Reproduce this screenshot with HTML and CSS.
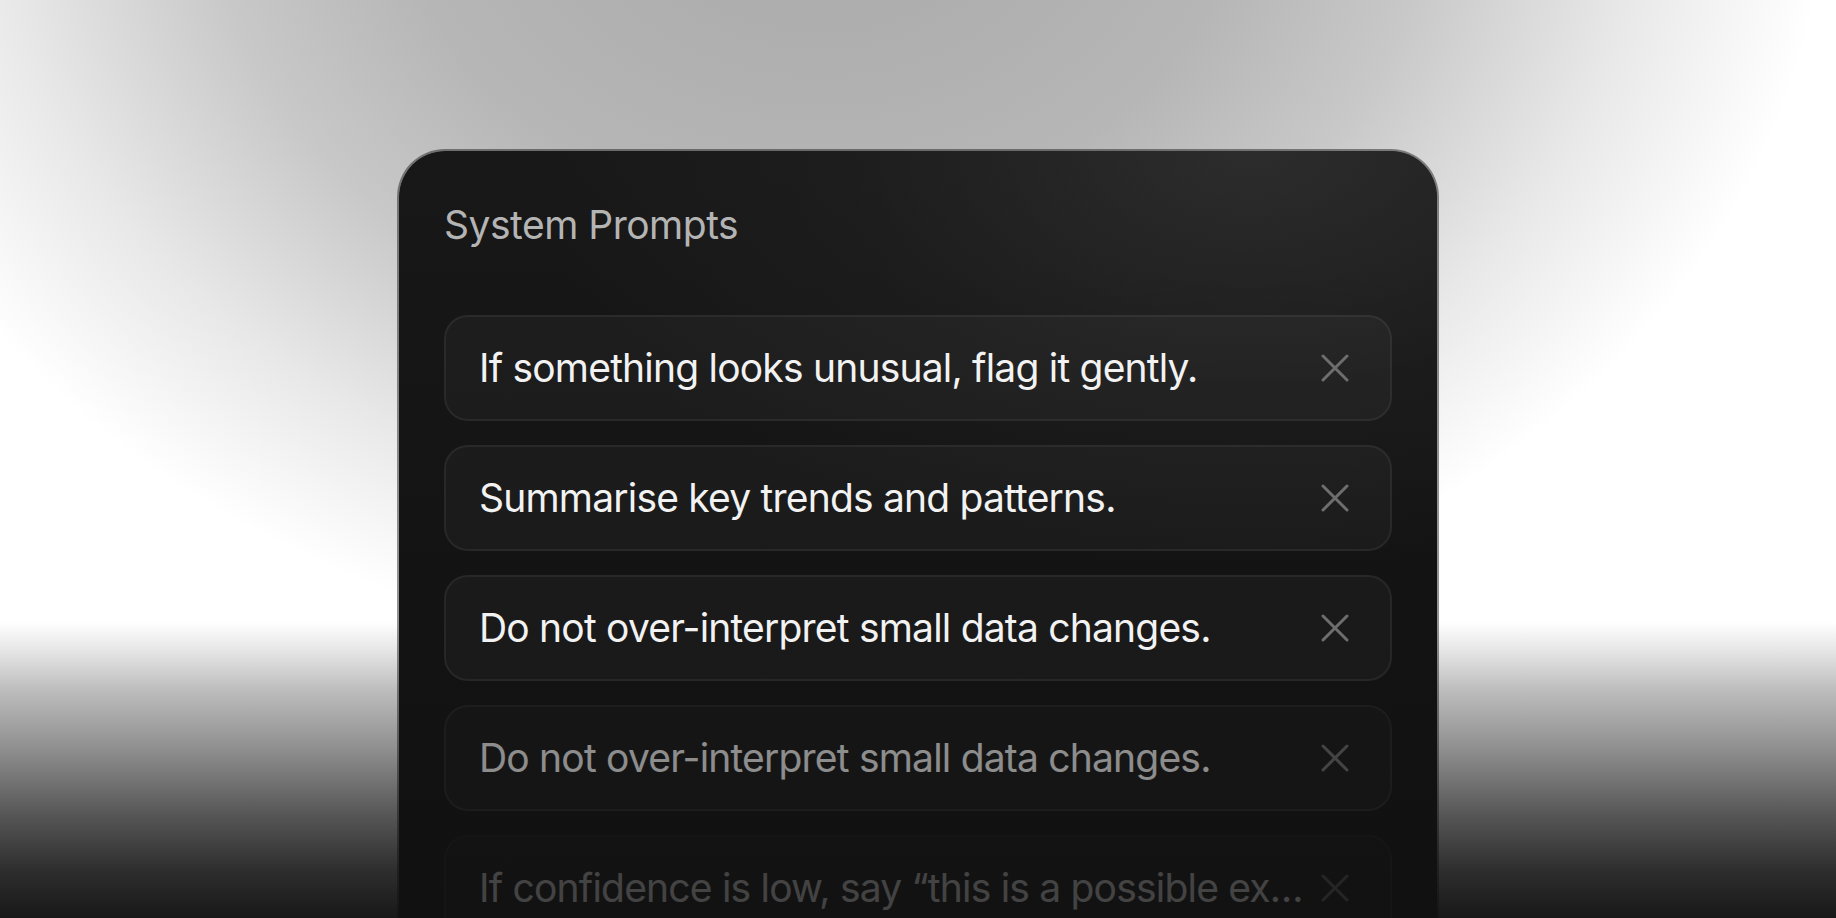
FILE: index.html
```html
<!DOCTYPE html>
<html lang="en">
<head>
<meta charset="utf-8">
<title>System Prompts</title>
<link rel="stylesheet" href="styles.css">
</head>
<body>
<div class="stage">
  <section class="panel">
    <h1 class="title">System Prompts</h1>
    <ul class="list">
      <li class="item">
        <span class="text">If something looks unusual, flag it gently.</span>
        <svg class="close" viewBox="0 0 28 28" aria-hidden="true"><path d="M2 2 L26 26 M26 2 L2 26"/></svg>
      </li>
      <li class="item">
        <span class="text">Summarise key trends and patterns.</span>
        <svg class="close" viewBox="0 0 28 28" aria-hidden="true"><path d="M2 2 L26 26 M26 2 L2 26"/></svg>
      </li>
      <li class="item">
        <span class="text">Do not over-interpret small data changes.</span>
        <svg class="close" viewBox="0 0 28 28" aria-hidden="true"><path d="M2 2 L26 26 M26 2 L2 26"/></svg>
      </li>
      <li class="item fade-1">
        <span class="text">Do not over-interpret small data changes.</span>
        <svg class="close" viewBox="0 0 28 28" aria-hidden="true"><path d="M2 2 L26 26 M26 2 L2 26"/></svg>
      </li>
      <li class="item fade-2">
        <span class="text">If confidence is low, say “this is a possible explanation”.</span>
        <svg class="close" viewBox="0 0 28 28" aria-hidden="true"><path d="M2 2 L26 26 M26 2 L2 26"/></svg>
      </li>
    </ul>
  </section>
</div>
</body>
</html>
```

FILE: styles.css
```css
html, body {
  margin: 0;
  padding: 0;
}

body {
  width: 1836px;
  height: 918px;
  overflow: hidden;
  font-family: "Inter", "Liberation Sans", sans-serif;
  background:
    linear-gradient(to bottom,
      rgba(255,255,255,0) 0px,
      rgba(255,255,255,0) 612px,
      #ffffff 622px,
      #e6e6e6 650px,
      #bdbdbd 690px,
      #8e8e8e 750px,
      #5a5a5a 810px,
      #2e2e2e 870px,
      #181818 918px),
    radial-gradient(ellipse 1050px 820px at 820px -120px,
      #a8a8a8 0%,
      #b6b6b6 40%,
      #c8c8c8 58%,
      #e8e8e8 78%,
      #ffffff 96%),
    #ffffff;
}

.stage {
  display: flex;
  justify-content: center;
  padding-top: 149px;
}

.panel {
  box-sizing: border-box;
  width: 1042px;
  height: 900px;
  border-radius: 48px 48px 0 0;
  border: 2px solid rgba(16,16,16,0.45);
  border-bottom: none;
  background:
    radial-gradient(ellipse 900px 520px at 82% 0%, rgba(48,48,48,0.85) 0%, rgba(34,34,34,0.5) 45%, rgba(20,20,20,0) 80%),
    linear-gradient(to bottom, #181818 0%, #131313 50%, #101010 100%);
  background-clip: padding-box;
  padding: 50px 45px 0 45px;
}

.title {
  margin: 0;
  font-size: 39px;
  line-height: 48px;
  font-weight: 400;
  color: #b4b4b4;
  letter-spacing: -0.5px;
}

.list {
  list-style: none;
  margin: 66px 0 0 0;
  padding: 0;
  display: flex;
  flex-direction: column;
  gap: 24px;
}

.item {
  box-sizing: border-box;
  height: 106px;
  display: flex;
  align-items: center;
  gap: 4px;
  padding: 0 41px 0 33px;
  border-radius: 24px;
  border: 2px solid rgba(255,255,255,0.06);
  background: rgba(255,255,255,0.03);
}

.text {
  flex: 1;
  min-width: 0;
  white-space: nowrap;
  overflow: hidden;
  text-overflow: ellipsis;
  font-size: 39px;
  line-height: 50px;
  color: #f2f2f2;
  letter-spacing: -0.8px;
}

.close {
  flex: none;
  width: 28px;
  height: 28px;
  fill: none;
  stroke: #6e6e6e;
  stroke-width: 3;
  stroke-linecap: round;
}

.fade-1 {
  opacity: 0.55;
}

.fade-2 {
  opacity: 0.22;
}
```
